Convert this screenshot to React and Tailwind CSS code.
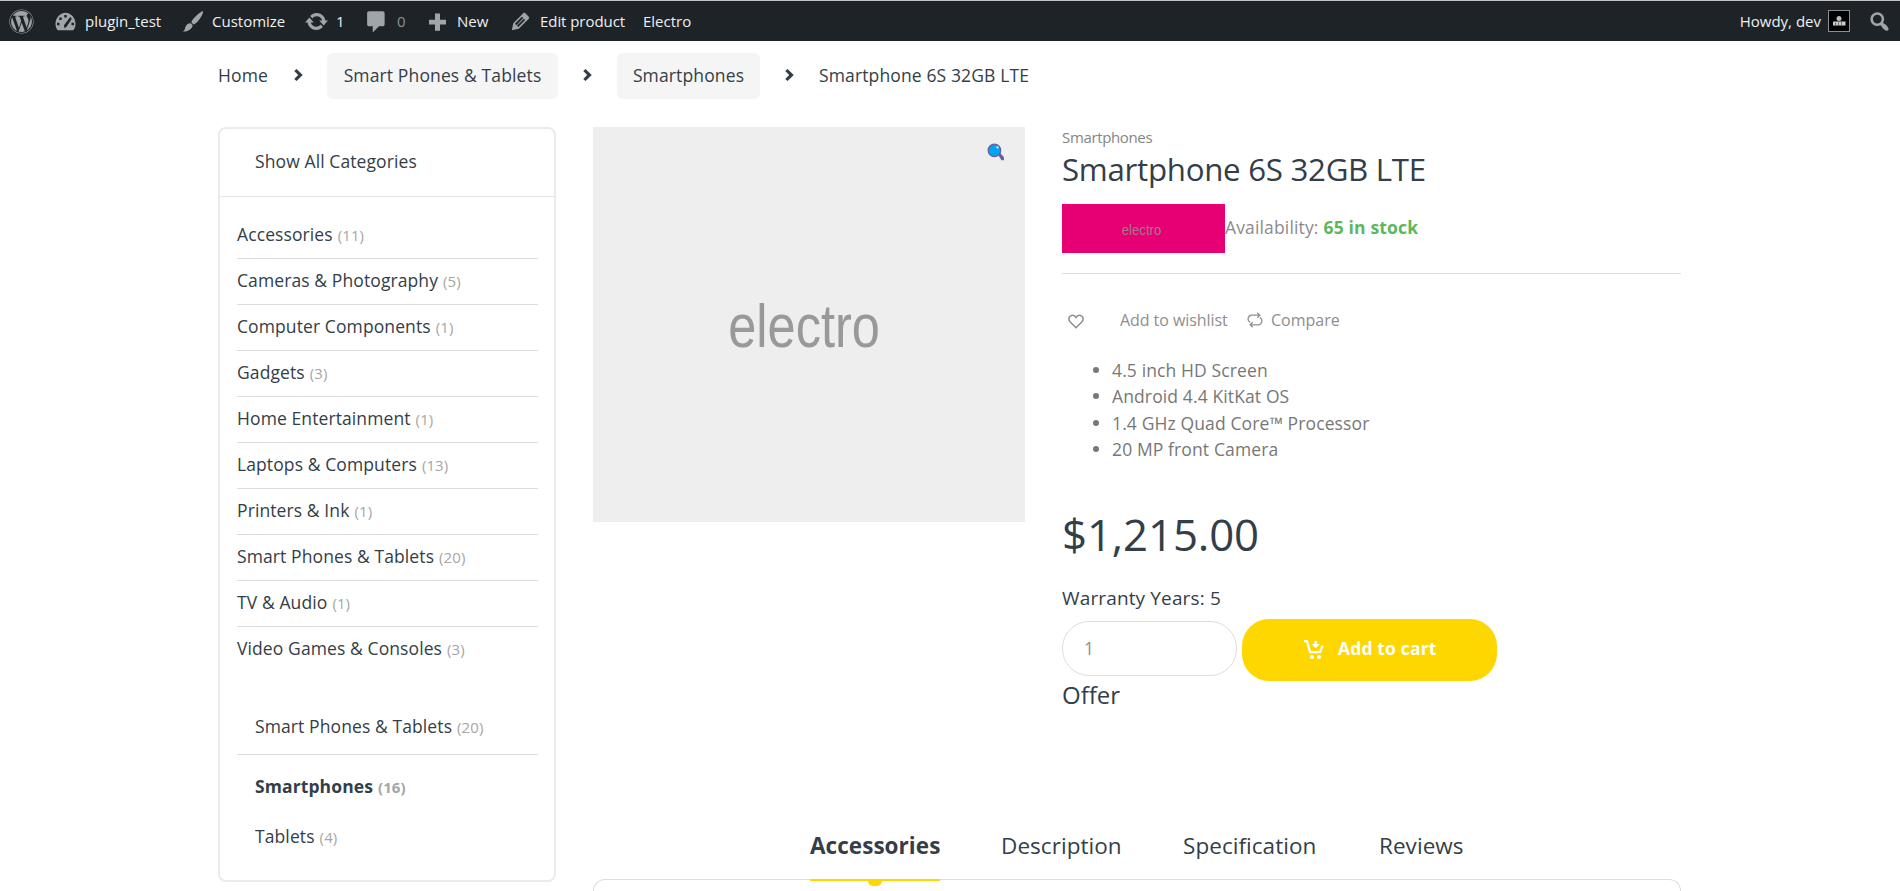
import { FaWordpress } from "react-icons/fa";

const categories = [
  ["Accessories", 11],
  ["Cameras & Photography", 5],
  ["Computer Components", 1],
  ["Gadgets", 3],
  ["Home Entertainment", 1],
  ["Laptops & Computers", 13],
  ["Printers & Ink", 1],
  ["Smart Phones & Tablets", 20],
  ["TV & Audio", 1],
  ["Video Games & Consoles", 3],
];

const features = [
  "4.5 inch HD Screen",
  "Android 4.4 KitKat OS",
  "1.4 GHz Quad Core™ Processor",
  "20 MP front Camera",
];

const Count = ({ n }) => <span className="ml-[5px] text-[15px] text-[#a6a6a6]">({n})</span>;

const Dash = ({ d, children }) => (
  <svg viewBox="0 0 20 20" className="size-[25px] shrink-0 fill-[#a0a5aa]">
    {d && <path d={d} />}
    {children}
  </svg>
);

const UPDATE =
  "M10.2 3.28c3.53 0 6.43 2.61 6.92 6h2.08l-3.5 4-3.5-4h2.32c-.45-1.97-2.21-3.45-4.32-3.45-1.45 0-2.73.71-3.54 1.78L4.95 5.66C6.23 4.2 8.11 3.28 10.2 3.28zm-.4 13.44c-3.52 0-6.43-2.61-6.92-6H.8l3.5-4c1.17 1.33 2.33 2.67 3.5 4H5.48c.45 1.97 2.21 3.45 4.32 3.45 1.45 0 2.73-.71 3.54-1.78l1.71 1.95c-1.28 1.46-3.15 2.38-5.25 2.38z";
const EDIT =
  "M13.89 3.39l2.71 2.72c.46.46.42 1.24.03 1.64l-8.01 8.02-5.56 1.16 1.16-5.58s7.6-7.63 7.99-8.03c.39-.39 1.22-.39 1.68.07zm-2.73 2.79l-5.59 5.61 1.11 1.11 5.54-5.65zm-2.97 8.23l5.58-5.6-1.07-1.08-5.59 5.6z";
const SEARCH =
  "M12.14 4.18c1.87 1.87 2.11 4.75.72 6.89.12.1.22.21.36.31.2.16.47.36.81.59.34.24.56.39.66.47.42.31.73.57.94.78.32.32.6.65.84 1 .25.35.44.69.59 1.04.14.35.21.68.18 1-.02.32-.14.59-.36.81s-.49.34-.81.36c-.31.02-.65-.04-.99-.19-.35-.14-.7-.34-1.04-.59-.35-.24-.68-.52-1-.84-.21-.21-.47-.52-.77-.93-.1-.13-.25-.35-.47-.66-.22-.32-.4-.57-.56-.78-.16-.2-.29-.35-.44-.5-2.07 1.09-4.69.76-6.44-.98-2.14-2.15-2.14-5.64 0-7.78 2.15-2.15 5.63-2.15 7.78 0zm-1.41 6.36c1.36-1.37 1.36-3.58 0-4.95-1.37-1.37-3.59-1.37-4.95 0-1.37 1.37-1.37 3.58 0 4.95 1.36 1.37 3.58 1.37 4.95 0z";

function AdminBar() {
  return (
    <header className="flex h-[41px] items-center border-t border-[#c3c4c7] bg-[#1d2327] text-[15px] text-[#f0f0f1]">
      <FaWordpress className="ml-[9px] size-[25px] shrink-0 text-[#a0a5aa]" />
      <div className="ml-[19px] flex w-[127px] items-center gap-[7px]">
        <Dash>
          <path fillRule="evenodd" d="M3.8 17h12.4c1.1-1.4 1.8-3.200 1.8-5.100C18 7 14.400 3 10 3S2 7 2 11.900c0 1.900.7 3.700 1.800 5.100zM9 4.800h2v2H9zM5 6.800h2v2H5zM13.800 6.400l1.300 1.300-4 6.100c-.4 1-2.600.7-2.300-.9zM3.200 11h2v2h-2zM14.800 11h2v2h-2z" />
          <path d="M9.200 13.200l1.600 1-1.600 1.300z" fill="#1d2327" />
        </Dash>
        <span>plugin_test</span>
      </div>
      <div className="flex w-[124px] items-center gap-[7px]">
        <Dash>
          <path d="M18.300 1.800c.6.5-.4 3-2 5.300-1.700 2.500-3.600 4.600-5.200 5.200-.7-.2-1.800-1.100-2-1.900.7-1.900 2.500-3.900 4.600-5.700 2-1.700 4.100-3.400 4.600-2.900zM8.200 11.400c.9.3 1.600 1 1.900 1.800-.2 1.400-1 2.700-2.700 3.600-1.600.9-3.600 1.500-5.500 1.200 1.400-.5 1.900-1.500 2.200-2.900.4-2 2-3.900 4.100-3.700z" />
        </Dash>
        <span>Customize</span>
      </div>
      <div className="flex w-[60px] items-center gap-[7px]">
        <Dash d={UPDATE} />
        <span>1</span>
      </div>
      <div className="flex w-[61px] items-center gap-[8px]">
        <Dash d="M4 1.800h11c.8 0 1.500.7 1.500 1.500v9c0 .8-.7 1.500-1.500 1.500h-3L7 18.800v-5H4c-.8 0-1.500-.7-1.500-1.500v-9c0-.8.7-1.500 1.500-1.500z" />
        <span className="text-[#8c8f94]">0</span>
      </div>
      <div className="flex w-[83px] items-center gap-[7px]">
        <Dash d="M8 3.500h4v5h4.800v3.800H12v5H8v-5H3.200V8.500H8z" />
        <span>New</span>
      </div>
      <div className="flex w-[135px] items-center gap-[7px]">
        <Dash d={EDIT} />
        <span className="tracking-[-0.06px]">Edit product</span>
      </div>
      <span>Electro</span>
      <span className="mr-[7px] ml-auto">Howdy, dev</span>
      <svg viewBox="0 0 22 22" className="mr-[17px] size-[22px] shrink-0">
        <rect x=".5" y=".5" width="21" height="21" fill="#000" stroke="#8c8f94" />
        <circle cx="11" cy="8.500" r="2.500" fill="#bbb" />
        <rect x="5" y="11.500" width="12.500" height="4" fill="#ccc" />
        <path d="M7.500 12.500v3M10.500 12.500v3M13.500 12v3" stroke="#555" strokeWidth=".8" />
      </svg>
      <div className="mr-[8px] flex">
        <Dash d={SEARCH} />
      </div>
    </header>
  );
}

const Chevron = () => (
  <svg viewBox="0 0 8 11" className="mb-[2px] h-[12px] w-[9px] shrink-0 fill-[#333e48]">
    <path d="M2.200 0L7.900 5.500 2.200 11 .1 9.100 3.700 5.500.1 1.900z" />
  </svg>
);

function Breadcrumb() {
  return (
    <nav className="mt-[12px] ml-[218px] flex h-[46px] items-center text-[17.5px] tracking-[0.13px]">
      <span className="w-[76px] pb-[2px]">Home</span>
      <Chevron />
      <span className="mr-[25px] ml-[24px] flex h-[46px] w-[231px] items-center justify-center rounded-[6px] bg-[#f5f5f5] pb-[2px]">
        Smart Phones &amp; Tablets
      </span>
      <Chevron />
      <span className="mr-[25px] ml-[25px] flex h-[46px] w-[143px] items-center justify-center rounded-[6px] bg-[#f5f5f5] pb-[2px]">
        Smartphones
      </span>
      <Chevron />
      <span className="ml-[25px] pb-[2px]">Smartphone 6S 32GB LTE</span>
    </nav>
  );
}

function Sidebar() {
  return (
    <aside className="h-[755px] w-[338px] shrink-0 rounded-[8px] border-2 border-[#ebebeb] tracking-[0.1px]">
      <div className="flex h-[68px] items-center border-b border-[#e6e6e6] pb-[2px] pl-[35px]">Show All Categories</div>
      <div className="mt-[16px] flex flex-col pr-[16px] pl-[17px]">
        {categories.map(([name, n], i) => (
          <div
            key={name}
            className={
              i < categories.length - 1
                ? "flex h-[46px] items-baseline border-b border-[#dcdcdc] pt-[8px]"
                : "flex h-[46px] items-baseline pt-[8px]"
            }
          >
            {name}
            <Count n={n} />
          </div>
        ))}
        <div className="mt-[22px] flex h-[60px] items-baseline border-b border-[#dcdcdc] pt-[18px] pl-[18px]">
          Smart Phones &amp; Tablets
          <Count n={20} />
        </div>
        <div className="flex h-[50px] items-baseline pt-[18px] pl-[18px] font-bold">
          Smartphones
          <Count n={16} />
        </div>
        <div className="flex h-[50px] items-baseline pt-[18px] pl-[18px]">
          Tablets
          <Count n={4} />
        </div>
      </div>
    </aside>
  );
}

function Gallery() {
  return (
    <div className="relative flex h-[395px] w-[432px] shrink-0 items-center justify-center bg-[#eee]">
      <span className="mr-[10px] origin-center scale-x-[.815] pt-[3px] font-['Liberation_Sans',Arial,sans-serif] text-[62px] leading-none text-[#999]">
        electro
      </span>
      <svg viewBox="0 0 16 17" className="absolute top-[16px] right-[20px] h-[18px] w-[18px]">
        <path d="M9.500 10.500l2-1.500 4 4.500v2.800h-2.300z" fill="#6b5b9e" />
        <circle cx="6.500" cy="7" r="5.900" fill="#00a4ef" stroke="#6b5b9e" strokeWidth="1.200" />
        <path d="M8.500 3.300h1.800v1.700H8.500z" fill="#fff" />
      </svg>
    </div>
  );
}

function Summary() {
  return (
    <section className="flex w-[619px] flex-col">
      <div className="mt-[-1px] h-[22px] text-[15px] leading-[22px] tracking-[-0.35px] text-[#858585]">Smartphones</div>
      <h1 className="h-[42px] text-[31.25px] leading-[42px] tracking-[-0.28px]">Smartphone 6S 32GB LTE</h1>
      <div className="mt-[14px] flex h-[70px] border-b border-[#ddd]">
        <div className="flex h-[49px] w-[163px] items-center justify-center bg-[#e60073]">
          <span className="mt-[3px] mr-[4px] scale-x-[.88] font-['Liberation_Sans',Arial,sans-serif] text-[15px] text-[#a8788c]">electro</span>
        </div>
        <div className="flex h-[46px] items-center tracking-[0.15px] text-[#8b8b8f]">
          Availability:<strong className="ml-[5px] tracking-[0.15px] text-[#5cb85c]">65 in stock</strong>
        </div>
      </div>
      <div className="mt-[32px] flex h-[27px] items-center text-[16px] text-[#8e8e8e]">
        <svg viewBox="0 0 16 15" className="mt-[4px] ml-[6px] h-[15px] w-[16px]" fill="none" stroke="currentColor" strokeWidth="1.500">
          <path d="M8 13.800L1.800 7.500C-.2 4.800 1.400 1.200 4.500 1.200 6 1.200 7.300 2 8 3.500 8.700 2 10 1.200 11.500 1.200c3.100 0 4.700 3.600 2.700 6.300z" />
        </svg>
        <span className="ml-[36px] w-[127px] tracking-[-0.06px]">Add to wishlist</span>
        <svg viewBox="0 0 16 16" className="h-[16px] w-[16px]" fill="none" stroke="currentColor" strokeWidth="1.300">
          <path d="M3.200 10.300C1.300 9.300.8 7.800 1.200 6.200 1.700 4.300 3.200 3.200 5 3.200h7.700M10.300.6L12.800 3.200l-2.500 2.500M12.800 5.700c1.900 1 2.400 2.500 2 4.100-.5 1.900-2 3-3.800 3H3.300M5.700 10.300L3.200 12.800l2.500 2.600" />
        </svg>
        <span className="ml-[8px]">Compare</span>
      </div>
      <ul className="mt-[24px] flex flex-col text-[#777]">
        {features.map((f) => (
          <li key={f} className="flex h-[26.25px] items-center tracking-[0.12px]">
            <span className="mr-[13px] ml-[31px] size-[6px] rounded-full bg-[#777]" />
            {f}
          </li>
        ))}
      </ul>
      <div className="mt-[39px] h-[66px] text-[43.75px] leading-[66px] tracking-[-0.1px]">$1,215.00</div>
      <div className="mt-[18px] h-[26px] text-[19px] leading-[26px] tracking-[0.14px]">Warranty Years: 5</div>
      <div className="mt-[8px] flex h-[62px] items-center gap-[5px]">
        <div className="mb-[3px] flex h-[55px] w-[175px] items-center rounded-[27px] border border-[#ddd] pl-[21px] text-[#8e8e8e]">1</div>
        <button className="flex h-[62px] w-[255px] items-center rounded-[27px] bg-[#fed700] pl-[62px] font-bold text-white">
          <svg viewBox="0 0 20 20" className="size-[20px] fill-white">
            <path d="M0 0h3.900l3 11h8.200l2.700-5.800 2 .8L16.800 13.200H5.200L2.200 2.200H0zM10.300 1h2.800v3h2.500L11.700 8.200 7.800 4h2.500z" />
            <circle cx="8" cy="17" r="2.100" />
            <circle cx="15" cy="17" r="2.100" />
          </svg>
          <span className="mb-[4px] ml-[14px] tracking-[0.15px]">Add to cart</span>
        </button>
      </div>
      <div className="mt-[-3px] h-[34px] text-[24px] leading-[34px]">Offer</div>
    </section>
  );
}

function Tabs() {
  return (
    <div className="mt-[100px] flex flex-col">
      <div className="flex h-[53px] pl-[217px] text-[22.5px] leading-[40px] tracking-[0.05px]">
        <div className="relative h-[55px] w-[130px] shrink-0 border-b-2 border-[#fed700] font-bold">
          Accessories
          <span className="absolute top-[53px] left-[58px] h-[7px] w-[14px] rounded-b-[5px] bg-[#fed700]" />
        </div>
        <span className="ml-[61px] w-[182px] shrink-0">Description</span>
        <span className="w-[196px] shrink-0">Specification</span>
        <span>Reviews</span>
      </div>
      <div className="h-[12px] w-[1088px] rounded-t-[12px] border border-b-0 border-[#ddd]" />
    </div>
  );
}

export default function App() {
  return (
    <div className="h-[891px] w-[1900px] overflow-hidden bg-white font-['Open_Sans',sans-serif] whitespace-nowrap text-[#333e48]">
      <AdminBar />
      <Breadcrumb />
      <div className="mt-[28px] ml-[218px] flex h-[764px] gap-[37px] overflow-hidden text-[17.5px]">
        <Sidebar />
        <main className="flex flex-col">
          <div className="flex h-[600px] gap-[37px]">
            <Gallery />
            <Summary />
          </div>
          <Tabs />
        </main>
      </div>
    </div>
  );
}
